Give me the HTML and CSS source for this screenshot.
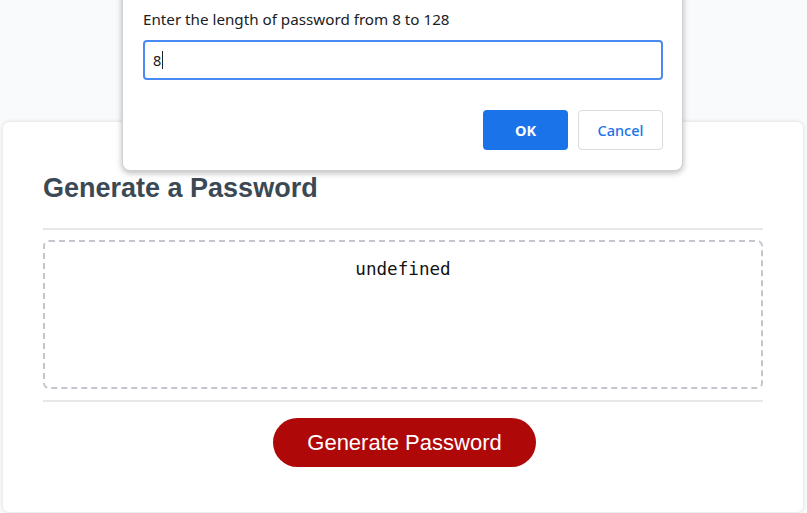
FILE: index.html
```html
<!DOCTYPE html>
<html lang="en">
<head>
<meta charset="UTF-8">
<title>Password Generator</title>
<link rel="stylesheet" href="styles.css">
</head>
<body>
  <div class="wrapper">
    <div class="card">
      <div class="card-header">
        <h2>Generate a Password</h2>
      </div>
      <div class="card-body">
        <div class="password-box">undefined</div>
      </div>
      <div class="card-footer">
        <button class="btn">Generate Password</button>
      </div>
    </div>
  </div>

  <div class="dialog">
    <p class="dialog-msg">Enter the length of password from 8 to 128</p>
    <div class="dialog-input"><span class="value">8</span><span class="caret"></span></div>
    <div class="dialog-actions">
      <button class="dbtn ok">OK</button>
      <button class="dbtn cancel">Cancel</button>
    </div>
  </div>
</body>
</html>
```
FILE: styles.css
```css
* { box-sizing: border-box; }

html, body {
  margin: 0;
  height: 100%;
}

body {
  background: #f9fafb;
  font-family: "Liberation Sans", Arial, sans-serif;
  overflow: hidden;
}

.wrapper {
  padding: 122px 0 0 3px;
}

.card {
  width: 800px;
  background: #fff;
  border-radius: 6px;
  box-shadow: 0 0 4px rgba(0, 0, 0, 0.14);
  padding: 0 40px;
  min-height: 390px;
}

.card-header {
  padding-top: 51px;
  padding-bottom: 25px;
  border-bottom: 2px solid #e6e7e9;
}

.card-header h2 {
  margin: 0;
  font-size: 27px;
  line-height: 30px;
  font-weight: bold;
  color: #3b4954;
}

.card-body {
  padding: 10px 0 11px;
  border-bottom: 2px solid #e6e7e9;
}

.password-box {
  height: 149px;
  border: 2px dashed #c3c6cc;
  border-radius: 6px;
  text-align: center;
  font-family: "DejaVu Sans Mono", "Liberation Mono", monospace;
  font-size: 17.6px;
  line-height: 20px;
  padding-top: 17px;
  color: #111;
}

.card-footer {
  padding: 16px 0 0 3px;
  display: flex;
  justify-content: center;
}

.btn {
  height: 49px;
  width: 263px;
  border: none;
  border-radius: 25px;
  background: #af0808;
  color: #fff;
  font-family: "Liberation Sans", Arial, sans-serif;
  font-size: 22px;
  padding: 0;
}

/* prompt dialog overlay */
.dialog {
  position: absolute;
  left: 122px;
  top: -20px;
  width: 561px;
  height: 191px;
  background: #fff;
  border: 1px solid #cfd1d4;
  border-radius: 8px;
  box-shadow: 0 2px 6px rgba(0, 0, 0, 0.28);
  padding: 20px 19px 0 20px;
  font-family: "Noto Sans", "Open Sans", sans-serif;
}

.dialog-msg {
  margin: 0;
  font-size: 15.2px;
  line-height: 36px;
  color: #202124;
}

.dialog-input {
  margin-top: 3px;
  height: 40px;
  border: 2px solid #4a8af4;
  border-radius: 4px;
  display: flex;
  align-items: center;
  padding-left: 8px;
  font-size: 14.5px;
  color: #202124;
}

.caret {
  display: inline-block;
  width: 1px;
  height: 18px;
  background: #202124;
  margin-left: 1px;
}

.dialog-actions {
  margin-top: 30px;
  display: flex;
  justify-content: flex-end;
  gap: 10px;
}

.dbtn {
  width: 85px;
  height: 40px;
  border-radius: 4px;
  font-family: "Noto Sans", "Open Sans", sans-serif;
  font-size: 14.5px;
  padding: 0;
}

.dbtn.ok {
  background: #1a73e8;
  color: #fff;
  border: none;
  font-weight: bold;
}

.dbtn.cancel {
  background: #fff;
  color: #1a73e8;
  border: 1px solid #dadce0;
  font-weight: 500;
}
```
